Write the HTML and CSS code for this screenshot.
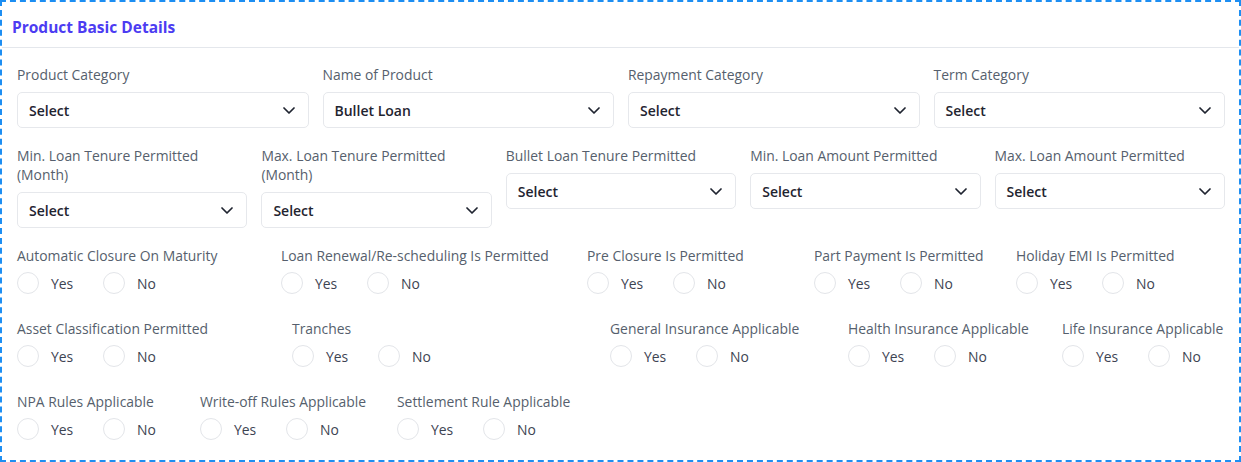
FILE: index.html
```html
<!DOCTYPE html>
<html lang="en">
<head>
<meta charset="utf-8">
<title>Product Basic Details</title>
<link rel="stylesheet" href="styles.css">
</head>
<body>
<div class="card">
  <div class="card-header"><h2 class="title">Product Basic Details</h2></div>
  <div class="card-body">
    <div class="row row-4">
      <div class="field"><label class="label">Product Category</label><div class="select"><span>Select</span><svg class="chev" viewBox="0 0 12 7" width="12" height="7"><path d="M1 1l5 5 5-5"/></svg></div></div>
      <div class="field"><label class="label">Name of Product</label><div class="select"><span>Bullet Loan</span><svg class="chev" viewBox="0 0 12 7" width="12" height="7"><path d="M1 1l5 5 5-5"/></svg></div></div>
      <div class="field"><label class="label">Repayment Category</label><div class="select"><span>Select</span><svg class="chev" viewBox="0 0 12 7" width="12" height="7"><path d="M1 1l5 5 5-5"/></svg></div></div>
      <div class="field"><label class="label">Term Category</label><div class="select"><span>Select</span><svg class="chev" viewBox="0 0 12 7" width="12" height="7"><path d="M1 1l5 5 5-5"/></svg></div></div>
    </div>
    <div class="row row-5">
      <div class="field"><label class="label">Min. Loan Tenure Permitted (Month)</label><div class="select"><span>Select</span><svg class="chev" viewBox="0 0 12 7" width="12" height="7"><path d="M1 1l5 5 5-5"/></svg></div></div>
      <div class="field"><label class="label">Max. Loan Tenure Permitted (Month)</label><div class="select"><span>Select</span><svg class="chev" viewBox="0 0 12 7" width="12" height="7"><path d="M1 1l5 5 5-5"/></svg></div></div>
      <div class="field"><label class="label">Bullet Loan Tenure Permitted</label><div class="select"><span>Select</span><svg class="chev" viewBox="0 0 12 7" width="12" height="7"><path d="M1 1l5 5 5-5"/></svg></div></div>
      <div class="field"><label class="label">Min. Loan Amount Permitted</label><div class="select"><span>Select</span><svg class="chev" viewBox="0 0 12 7" width="12" height="7"><path d="M1 1l5 5 5-5"/></svg></div></div>
      <div class="field"><label class="label">Max. Loan Amount Permitted</label><div class="select"><span>Select</span><svg class="chev" viewBox="0 0 12 7" width="12" height="7"><path d="M1 1l5 5 5-5"/></svg></div></div>
    </div>
    <div class="row radio-row r3">
      <div class="group"><div class="label">Automatic Closure On Maturity</div><div class="options"><span class="opt"><i class="circle"></i>Yes</span><span class="opt"><i class="circle"></i>No</span></div></div>
      <div class="group"><div class="label">Loan Renewal/Re-scheduling Is Permitted</div><div class="options"><span class="opt"><i class="circle"></i>Yes</span><span class="opt"><i class="circle"></i>No</span></div></div>
      <div class="group"><div class="label">Pre Closure Is Permitted</div><div class="options"><span class="opt"><i class="circle"></i>Yes</span><span class="opt"><i class="circle"></i>No</span></div></div>
      <div class="group"><div class="label">Part Payment Is Permitted</div><div class="options"><span class="opt"><i class="circle"></i>Yes</span><span class="opt"><i class="circle"></i>No</span></div></div>
      <div class="group"><div class="label">Holiday EMI Is Permitted</div><div class="options"><span class="opt"><i class="circle"></i>Yes</span><span class="opt"><i class="circle"></i>No</span></div></div>
    </div>
    <div class="row radio-row r4">
      <div class="group"><div class="label">Asset Classification Permitted</div><div class="options"><span class="opt"><i class="circle"></i>Yes</span><span class="opt"><i class="circle"></i>No</span></div></div>
      <div class="group"><div class="label">Tranches</div><div class="options"><span class="opt"><i class="circle"></i>Yes</span><span class="opt"><i class="circle"></i>No</span></div></div>
      <div class="group"><div class="label">General Insurance Applicable</div><div class="options"><span class="opt"><i class="circle"></i>Yes</span><span class="opt"><i class="circle"></i>No</span></div></div>
      <div class="group"><div class="label">Health Insurance Applicable</div><div class="options"><span class="opt"><i class="circle"></i>Yes</span><span class="opt"><i class="circle"></i>No</span></div></div>
      <div class="group"><div class="label">Life Insurance Applicable</div><div class="options"><span class="opt"><i class="circle"></i>Yes</span><span class="opt"><i class="circle"></i>No</span></div></div>
    </div>
    <div class="row radio-row r5">
      <div class="group"><div class="label">NPA Rules Applicable</div><div class="options"><span class="opt"><i class="circle"></i>Yes</span><span class="opt"><i class="circle"></i>No</span></div></div>
      <div class="group"><div class="label">Write-off Rules Applicable</div><div class="options"><span class="opt"><i class="circle"></i>Yes</span><span class="opt"><i class="circle"></i>No</span></div></div>
      <div class="group"><div class="label">Settlement Rule Applicable</div><div class="options"><span class="opt"><i class="circle"></i>Yes</span><span class="opt"><i class="circle"></i>No</span></div></div>
    </div>
  </div>
</div>
</body>
</html>
```
FILE: styles.css
```css
* { box-sizing: border-box; }
html, body { margin: 0; padding: 0; background: #fff; }
body {
  font-family: "Open Sans", "Noto Sans", sans-serif;
  color: #1f2937;
}
.card {
  width: 1241px;
  height: 462px;
  border: 2px dashed #1d8ef2;
  background: #fff;
  overflow: hidden;
}
.card-header {
  height: 46px;
  border-bottom: 1px solid #e4e7ec;
  display: flex;
  align-items: center;
  padding: 4px 10px 0;
}
.title {
  margin: 0;
  font-size: 15.5px;
  font-weight: 700;
  color: #4c3cf2;
}
.card-body {
  padding: 17px 14px 0 15px;
}
.row { display: grid; column-gap: 14px; }
.row-4 { grid-template-columns: repeat(4, 1fr); margin-bottom: 18px; }
.row-5 { grid-template-columns: repeat(5, 1fr); margin-bottom: 18px; align-items: start; }
.field { display: flex; flex-direction: column; }
.label {
  display: block;
  font-size: 13.9px;
  line-height: 19px;
  color: #565f6d;
  margin-bottom: 8px;
  padding-top: 1px;
  margin-top: -1px;
}
.radio-row .label { margin-bottom: 7px; }
.select {
  height: 36px;
  border: 1px solid #e6e8ec;
  border-radius: 5px;
  display: flex;
  align-items: center;
  justify-content: space-between;
  padding: 0 13px 0 11px;
  font-size: 14px;
  font-weight: 600;
  color: #1f2430;
}
.chev path { fill: none; stroke: #1f2430; stroke-width: 1.7; stroke-linecap: round; stroke-linejoin: round; }
.radio-row { column-gap: 0; margin-bottom: 25px; }
.r3 { grid-template-columns: 264px 306px 227px 202px auto; }
.r4 { grid-template-columns: 275px 318px 238px 214px auto; }
.r5 { grid-template-columns: 183px 197px auto; }
.options { display: flex; align-items: center; height: 22px; }
.opt {
  display: flex;
  align-items: center;
  width: 86px;
  font-size: 13.9px;
  color: #3d4452;
}
.circle {
  width: 22px;
  height: 22px;
  border: 1px solid #e3e5e9;
  border-radius: 50%;
  margin-right: 12px;
  flex: none;
}
```
